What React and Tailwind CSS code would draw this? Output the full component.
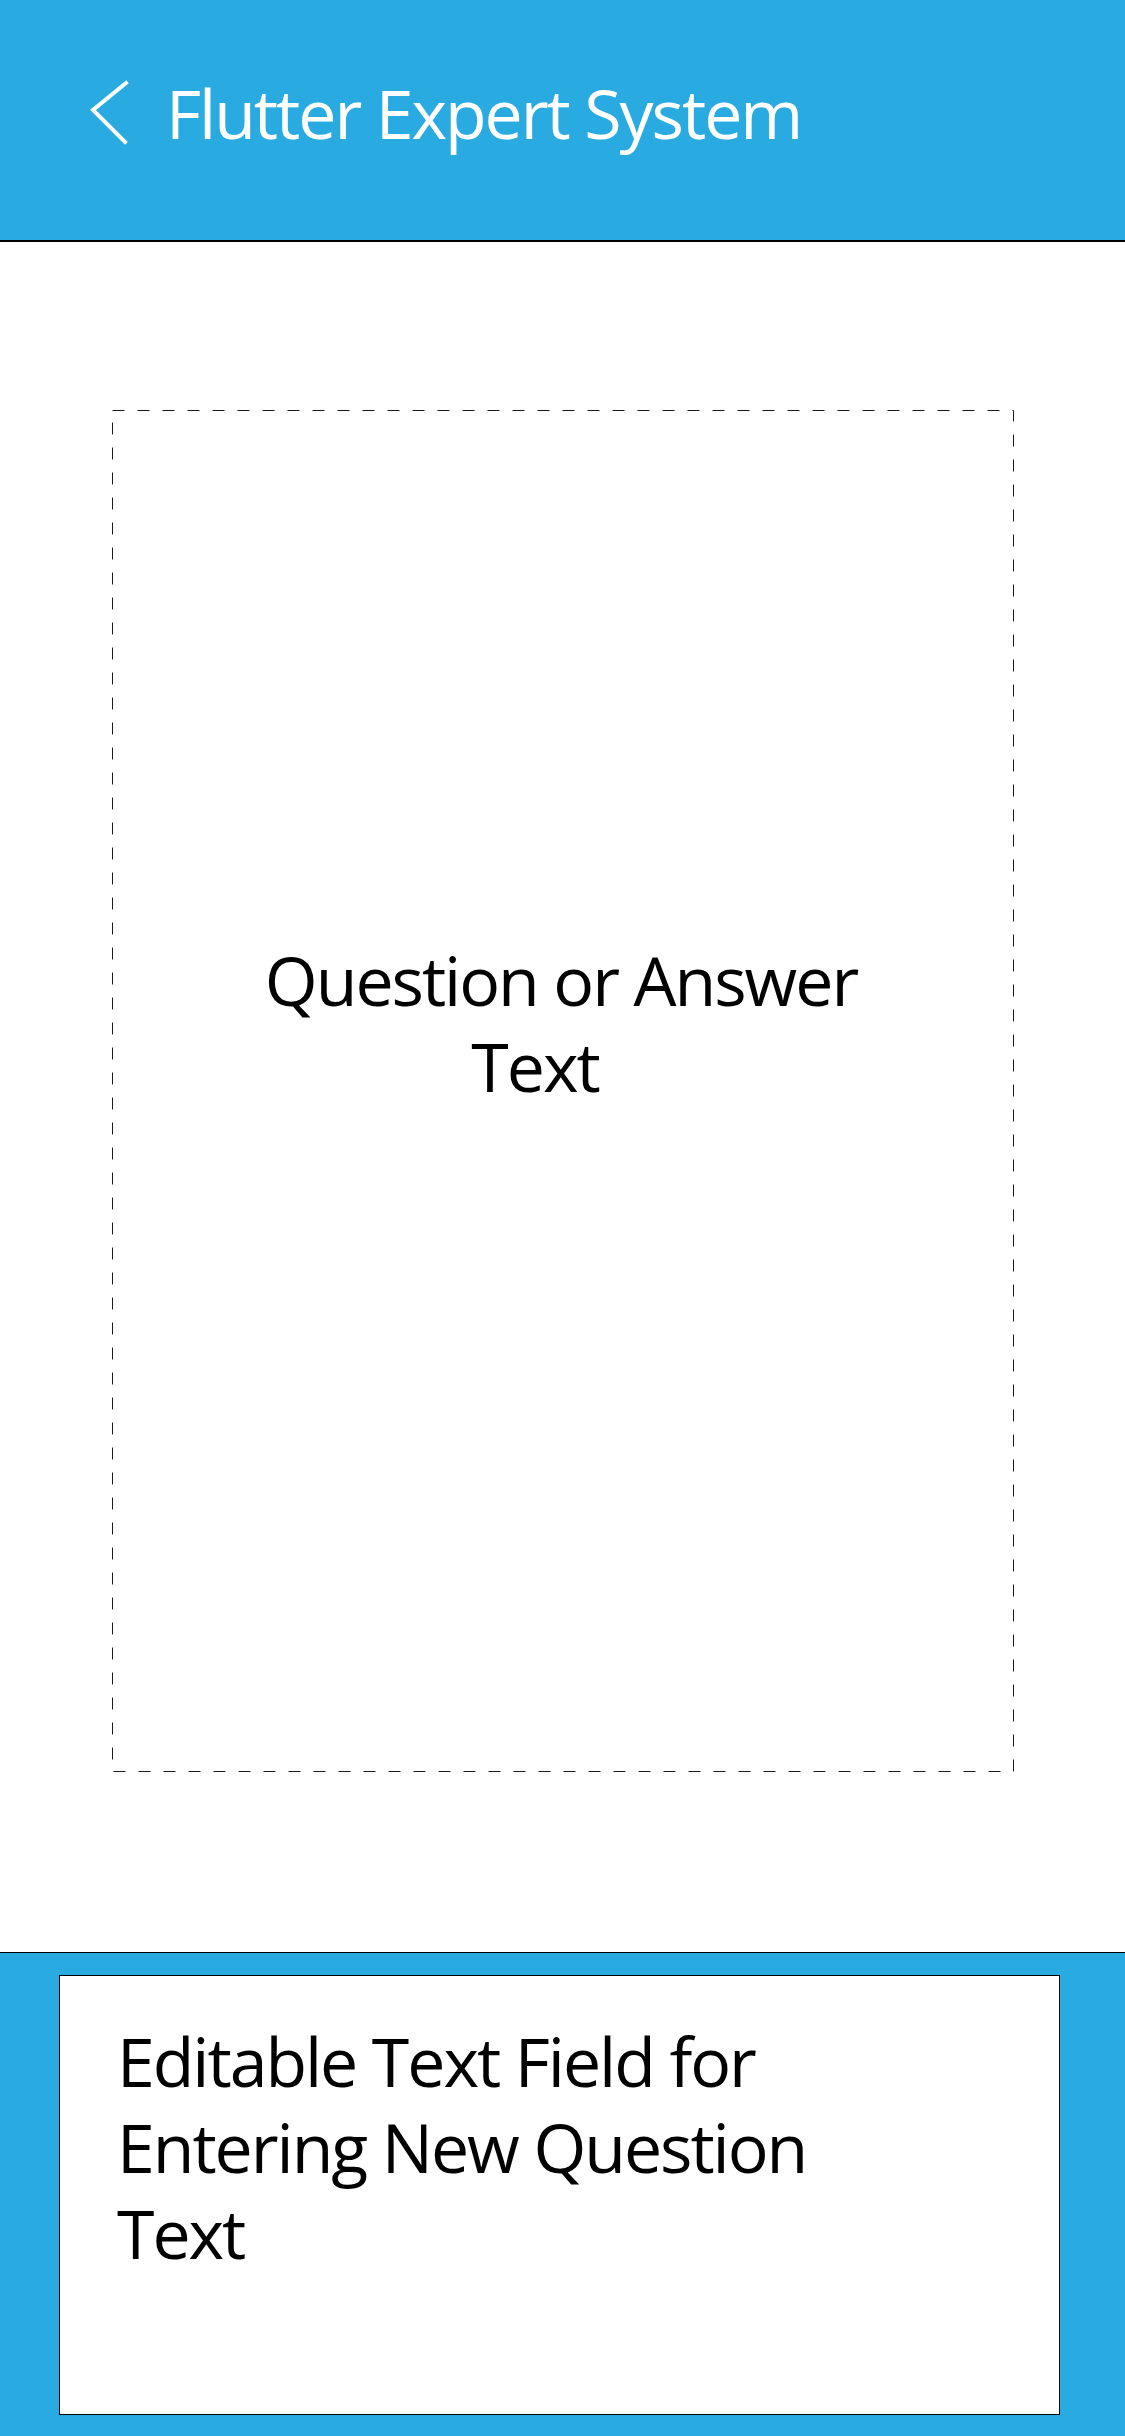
export default function App() {
  return (
    <div
      className="w-[1125px] h-[2436px] flex flex-col bg-white text-[68px] leading-[86px] tracking-[-0.03em]"
      style={{ fontFamily: '"Open Sans", "Noto Sans", sans-serif' }}
    >
      {/* Top bar */}
      <header className="h-[242px] shrink-0 bg-[#29abe2] border-b-2 border-black flex items-center pl-[90px] pb-[14px] gap-[36px] text-white">
        <svg width="40" height="66" viewBox="0 0 40 66" fill="none">
          <polyline points="36,3 3,30 35,62" stroke="white" strokeWidth="4" strokeLinecap="square" />
        </svg>
        <span>Flutter Expert System</span>
      </header>

      {/* Question / answer area */}
      <main className="flex-1 pt-[168px] pl-[112px]">
        <div className="relative w-[902px] h-[1362px] pt-[527px] pr-[4px] text-black text-center">
          <svg className="absolute inset-0" width="902" height="1362" fill="none">
            <rect x="0.5" y="0.5" width="901" height="1361" stroke="#1a1a1a" strokeWidth="1" strokeDasharray="12 13" />
          </svg>
          <p>Question or Answer</p>
          <p className="pr-[52px]">Text</p>
        </div>
      </main>

      {/* Input area */}
      <footer className="shrink-0 bg-[#29abe2] border-t border-black pt-[22px] pb-[21px] pl-[59px] pr-[65px]">
        <div className="h-[440px] bg-white border border-black pt-[42px] pl-[57px] text-black">
          <p>Editable Text Field for</p>
          <p>Entering New Question</p>
          <p>Text</p>
        </div>
      </footer>
    </div>
  )
}
